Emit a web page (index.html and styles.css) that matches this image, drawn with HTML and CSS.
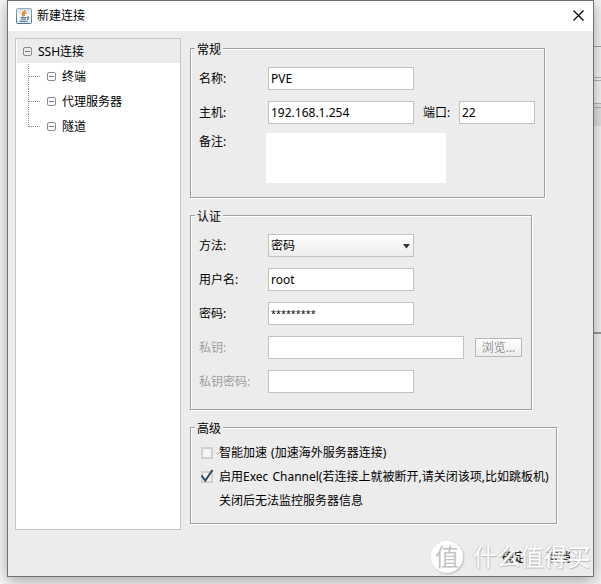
FILE: index.html
```html
<!DOCTYPE html>
<html lang="zh-CN">
<head>
<meta charset="utf-8">
<title>新建连接</title>
<link rel="stylesheet" href="styles.css">
</head>
<body>
<div class="backdrop"><i class="bar bar-top"></i><i class="bar bar-a"></i><i class="bar bar-b"></i><i class="bar bar-c"></i><i class="rest"></i></div>
<main class="dialog">
  <header class="titlebar">
    <svg class="java" width="16" height="16" viewBox="0 0 16 16">
      <defs><linearGradient id="jg" x1="0" y1="0" x2="0" y2="1"><stop offset="0" stop-color="#94a9b8"/><stop offset="1" stop-color="#4c7289"/></linearGradient><linearGradient id="jf" x1="0" y1="0" x2="0" y2="1"><stop offset="0" stop-color="#cdd9e1"/><stop offset=".5" stop-color="#fff"/><stop offset="1" stop-color="#dce9f2"/></linearGradient></defs>
      <rect x=".5" y=".5" width="15" height="15" rx="1" fill="url(#jf)" stroke="url(#jg)"/>
      <path d="M9 2C9 4 5.500 4.500 6.500 7L7.500 8.500M10.500 4.500C7.500 5.500 7.500 6 8.500 8" fill="none" stroke="#ee8528" stroke-width="1.500"/>
      <path d="M4.500 9.500H10.500M5 11.200H10M3.500 13.300H11.500M11 9C13.500 8.500 13 11 11 11.300" fill="none" stroke="#55809f" stroke-width="1.200"/>
    </svg>
    <h1 class="title">新建连接</h1>
    <svg class="close" width="11" height="11" viewBox="0 0 11 11"><path d="M.5 .5L10.500 10.500M10.500 .5L.5 10.500" stroke="#000" stroke-width="1.200"/></svg>
  </header>
  <div class="body">
    <nav class="tree">
      <div class="node root"><i class="toggle"></i>SSH连接</div>
      <div class="children">
        <div class="node"><i class="branch"></i><i class="toggle"></i>终端</div>
        <div class="node"><i class="branch"></i><i class="toggle"></i>代理服务器</div>
        <div class="node"><i class="branch"></i><i class="toggle"></i>隧道</div>
      </div>
    </nav>
    <form class="form">
      <section class="group general">
        <h2 class="legend">常规</h2>
        <div class="row"><label class="label">名称:</label><div class="field">PVE</div></div>
        <div class="row"><label class="label">主机:</label><div class="field">192.168.1.254</div><label class="port-label">端口:</label><div class="field port">22</div></div>
        <div class="row note-row"><label class="label">备注:</label><div class="note"></div></div>
      </section>
      <section class="group auth">
        <h2 class="legend">认证</h2>
        <div class="row"><label class="label">方法:</label><div class="field select">密码<svg width="8" height="5" viewBox="0 0 8 5"><path d="M0 0H7L3.500 4.500Z" fill="#333"/></svg></div></div>
        <div class="row"><label class="label">用户名:</label><div class="field">root</div></div>
        <div class="row"><label class="label">密码:</label><div class="field password">*********</div></div>
        <div class="row"><label class="label off">私钥:</label><div class="field wide"></div><button class="browse" type="button" disabled>浏览...</button></div>
        <div class="row"><label class="label off">私钥密码:</label><div class="field"></div></div>
      </section>
      <section class="group advanced">
        <h2 class="legend">高级</h2>
        <div class="option"><i class="check"></i><span>智能加速 (加速海外服务器连接)</span></div>
        <div class="option"><i class="check"><svg width="14" height="14" viewBox="0 0 14 14"><path d="M1.500 6.500L5.300 11.500L12.500 1" fill="none" stroke="#2c4a62" stroke-width="2"/></svg></i><span>启用Exec Channel(若连接上就被断开,请关闭该项,比如跳板机)</span></div>
        <div class="option hint">关闭后无法监控服务器信息</div>
      </section>
    </form>
  </div>
  <footer class="actions"><span>确定</span><span>取消</span></footer>
</main>
<div class="watermark"><span class="seal">值</span><span class="brand">什么值得买</span></div>
</body>
</html>
```

FILE: styles.css
```css
* { box-sizing: border-box; }
body {
  margin: 0;
  width: 601px;
  height: 584px;
  overflow: hidden;
  position: relative;
  background: #f8f8f8;
  color: #000;
  font: 12px/16px "Noto Sans", "Noto Sans CJK SC", sans-serif;
}
h1, h2 { margin: 0; font: inherit; }
i { font-style: normal; display: block; }
svg { display: block; flex: none; }

/* Window behind the dialog */
.backdrop { position: absolute; top: 0; right: 0; width: 8px; height: 584px; background: #f4f4f4; }
.bar { border-bottom: 1px solid #a0a0a0; }
.bar-top { height: 47px; }
.bar-a { height: 31px; border-bottom: 1px solid #b4b4b4; }
.bar-b { height: 28px; margin-top: 2px; border-top: 1px solid #b4b4b4; border-bottom: 0; box-shadow: inset 0 -4px 0 -3px #b4b4b4, inset 0 -4px 0 #e6e6e6, inset 0 -5px 0 #b4b4b4; }
.bar-c { height: 18px; background: #e0e0e0; border: 0; }
.rest { height: 208px; border-bottom: 2px solid #999; }

.dialog {
  position: relative;
  margin-left: 7px;
  width: 587px;
  height: 577px;
  display: flex;
  flex-direction: column;
  border: 1px solid #707070;
  background: #ececec;
  box-shadow: 0 4px 14px rgba(0, 0, 0, .34);
}
.titlebar {
  height: 30px;
  flex: none;
  display: flex;
  align-items: center;
  padding: 0 9px 1px 8px;
  background: #fff;
}
.title { flex: 1; margin-left: 5px; }
.body { display: flex; gap: 9px; padding: 7px 0 0 7px; }

.tree { width: 166px; height: 492px; border: 1px solid #c4c4c4; background: #fff; padding-left: 1px; }
.node { display: flex; align-items: center; height: 25px; }
.root { height: 24px; padding: 1px 0 0 6px; background: #ececec; }
.toggle {
  width: 9px;
  height: 9px;
  margin-right: 6px;
  flex: none;
  border: 1px solid #8a8a8a;
  border-radius: 2px;
  background: linear-gradient(#777, #777) center / 5px 1px no-repeat;
}
.children { padding: 1px 0 0 11px; }
.branch { align-self: flex-start; width: 13px; height: 25px; margin-right: 6px; border-left: 1px dotted #888; background: repeating-linear-gradient(90deg, #888 0 1px, transparent 1px 2px) 0 12px / 100% 1px no-repeat; }
.children .node:last-child .branch { height: 13px; }

.form { display: flex; flex-direction: column; gap: 17px; padding-top: 10px; }
.group { border: 1px solid #a0a0a0; padding-left: 8px; box-shadow: 1px 1px 0 #fff, inset 1px 1px 0 #fff; }
.legend { width: 28px; height: 16px; margin: -7px 0 0 -4px; padding-left: 2px; background: #ececec; white-space: nowrap; }
.general { width: 355px; height: 150px; }
.auth { width: 342px; height: 195px; }
.advanced { width: 367px; height: 97px; }
.row { display: flex; align-items: center; height: 23px; margin-bottom: 11px; }
.legend + .row { margin-top: 9px; }
.label { width: 69px; flex: none; }
.off { color: #a0a0a0; }
.field { width: 146px; height: 23px; border: 1px solid #c3c3c3; padding: 3px 0 0 2px; background: #fff; flex: none; }
.port-label { width: 36px; margin: 0 0 0 9px; }
.port { width: 76px; }
.wide { width: 196px; }
.select { display: flex; justify-content: space-between; padding-right: 2px; background: linear-gradient(#fff, #ececec); }
.select svg { margin-top: 6px; }
.password { font-size: 9px; }
.note-row { height: 50px; margin-top: -2px; align-items: flex-start; }
.note-row .label { width: 67px; padding-top: 1px; }
.note { width: 180px; height: 50px; background: #fff; }
.browse { width: 47px; height: 19px; margin-left: 11px; padding: 0; border: 1px solid #b8b8b8; background: linear-gradient(#fff, #ececec); font: inherit; line-height: 15px; color: #909090; }
.option { display: flex; align-items: center; height: 24px; padding-left: 2px; white-space: nowrap; word-spacing: 1px; }
.legend + .option { margin-top: 4px; }
.check { width: 12px; height: 12px; margin-right: 6px; flex: none; border: 2px solid #d0d0d0; background: #f4f4f4; }
.check svg { margin: -4px 0 0 -3px; }
.hint { padding-left: 20px; }
.actions { display: flex; gap: 21px; margin-top: 20px; padding-left: 494px; }

.watermark { position: absolute; left: 431px; top: 541px; display: flex; align-items: center; color: #fff; white-space: nowrap; }
.seal { width: 32px; height: 32px; border-radius: 50%; background: #fff; color: #c4c4c4; font-size: 24px; line-height: 31px; text-align: center; box-shadow: 1px 1px 2px #bbb; }
.brand { margin-left: 10px; font-size: 23.5px; line-height: 32px; font-weight: 400; text-shadow: 1px 1px 1px #bbb, -1px 0 1px #ccc; }
```
